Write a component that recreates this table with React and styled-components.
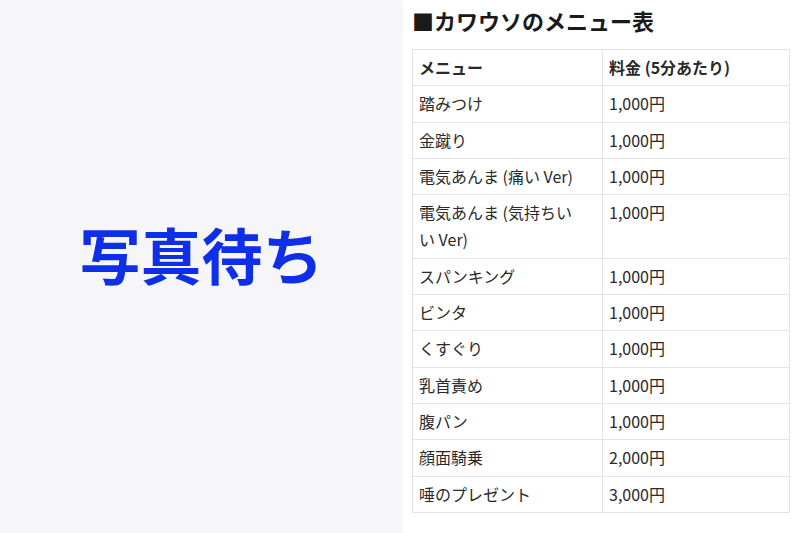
import React from 'react'
import styled, { createGlobalStyle } from 'styled-components'

const GlobalStyle = createGlobalStyle`
  html, body {
    margin: 0;
    padding: 0;
    background: #ffffff;
  }
  body {
    font-family: "Noto Sans CJK JP", "Noto Sans", sans-serif;
    color: #222;
  }
`

const Page = styled.div`
  display: flex;
  width: 800px;
  height: 533px;
  overflow: hidden;
`

const PhotoPanel = styled.div`
  width: 403px;
  flex-shrink: 0;
  background: #f6f6f8;
  display: flex;
  align-items: center;
  justify-content: center;
`

const Waiting = styled.div`
  font-family: "Noto Sans CJK JP", sans-serif;
  font-weight: 700;
  font-size: 61px;
  line-height: 1.2;
  color: #0f2ee8;
  margin-bottom: 26px;
`

const MenuPanel = styled.div`
  flex: 1;
  background: #fff;
  padding: 5px 0 0 9px;
`

const Title = styled.h2`
  margin: 0 0 14px 0;
  font-size: 22px;
  line-height: 30px;
  font-weight: 700;
  color: #1a1a1a;
`

const Table = styled.table`
  border-collapse: collapse;
  width: 378px;
  table-layout: fixed;
  font-size: 16px;
`

const Cell = styled.td`
  border: 1px solid #e3e3e3;
  padding: 4px 6px;
  line-height: 27.3px;
  vertical-align: top;
  color: #2a2a2a;
  font-weight: ${p => (p.$head ? 700 : 400)};
  width: ${p => (p.$first ? '177px' : 'auto')};
`

const rows = [
  ['踏みつけ', '1,000円'],
  ['金蹴り', '1,000円'],
  ['電気あんま (痛い Ver)', '1,000円'],
  [<>電気あんま (気持ちい<br />い Ver)</>, '1,000円'],
  ['スパンキング', '1,000円'],
  ['ビンタ', '1,000円'],
  ['くすぐり', '1,000円'],
  ['乳首責め', '1,000円'],
  ['腹パン', '1,000円'],
  ['顔面騎乗', '2,000円'],
  ['唾のプレゼント', '3,000円'],
]

export default function App() {
  return (
    <Page>
      <GlobalStyle />
      <PhotoPanel>
        <Waiting>写真待ち</Waiting>
      </PhotoPanel>
      <MenuPanel>
        <Title>■カワウソのメニュー表</Title>
        <Table>
          <tbody>
            <tr>
              <Cell $head $first>メニュー</Cell>
              <Cell $head>料金 (5分あたり)</Cell>
            </tr>
            {rows.map((r, i) => (
              <tr key={i}>
                <Cell $first>{r[0]}</Cell>
                <Cell>{r[1]}</Cell>
              </tr>
            ))}
          </tbody>
        </Table>
      </MenuPanel>
    </Page>
  )
}
